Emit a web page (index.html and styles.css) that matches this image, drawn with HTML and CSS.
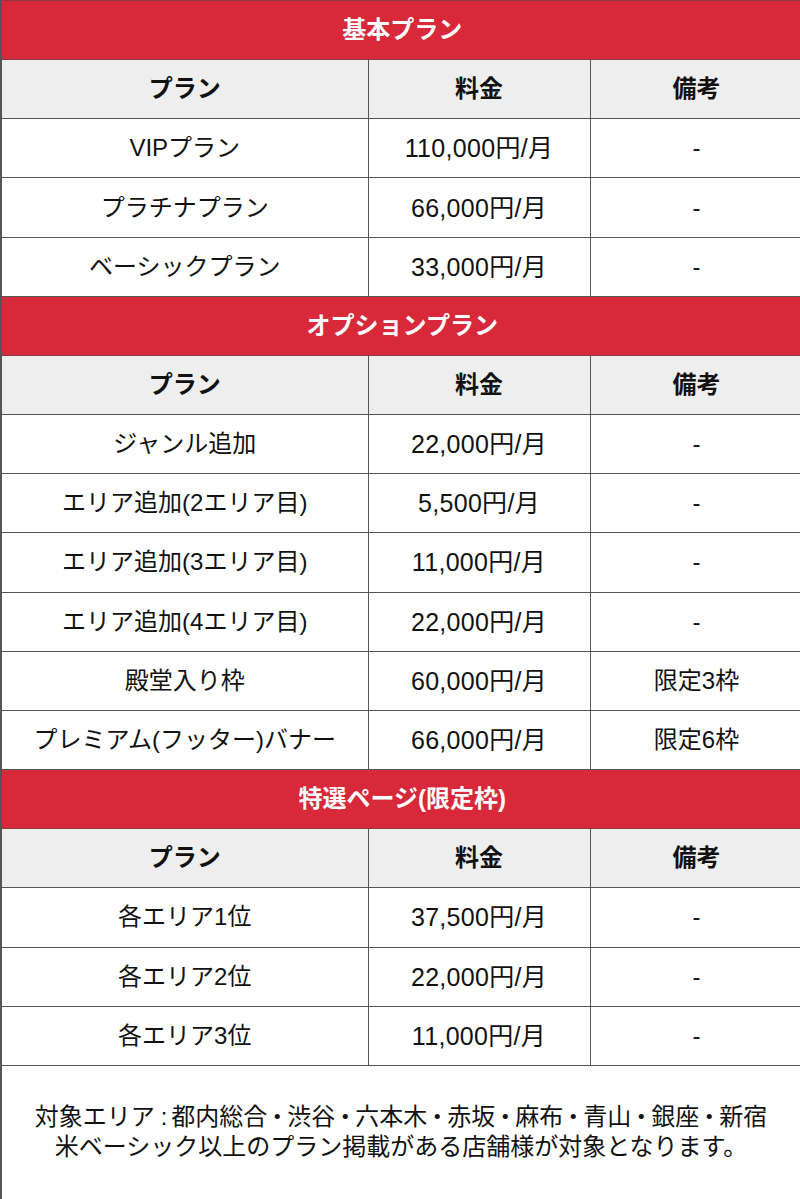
FILE: index.html
```html
<!DOCTYPE html>
<html lang="ja">
<head>
<meta charset="utf-8">
<link rel="stylesheet" href="styles.css">
</head>
<body>
<table class="price">
  <colgroup><col class="c1"><col class="c2"><col class="c3"></colgroup>
  <tr class="title"><td colspan="3">基本プラン</td></tr>
  <tr class="head"><td>プラン</td><td>料金</td><td>備考</td></tr>
  <tr><td>VIPプラン</td><td class="fee">110,000円/月</td><td>-</td></tr>
  <tr><td>プラチナプラン</td><td class="fee">66,000円/月</td><td>-</td></tr>
  <tr><td>ベーシックプラン</td><td class="fee">33,000円/月</td><td>-</td></tr>
  <tr class="title"><td colspan="3">オプションプラン</td></tr>
  <tr class="head"><td>プラン</td><td>料金</td><td>備考</td></tr>
  <tr><td>ジャンル追加</td><td class="fee">22,000円/月</td><td>-</td></tr>
  <tr><td>エリア追加(2エリア目)</td><td class="fee">5,500円/月</td><td>-</td></tr>
  <tr><td>エリア追加(3エリア目)</td><td class="fee">11,000円/月</td><td>-</td></tr>
  <tr><td>エリア追加(4エリア目)</td><td class="fee">22,000円/月</td><td>-</td></tr>
  <tr><td>殿堂入り枠</td><td class="fee">60,000円/月</td><td>限定3枠</td></tr>
  <tr><td>プレミアム(フッター)バナー</td><td class="fee">66,000円/月</td><td>限定6枠</td></tr>
  <tr class="title"><td colspan="3">特選ページ(限定枠)</td></tr>
  <tr class="head"><td>プラン</td><td>料金</td><td>備考</td></tr>
  <tr><td>各エリア1位</td><td class="fee">37,500円/月</td><td>-</td></tr>
  <tr><td>各エリア2位</td><td class="fee">22,000円/月</td><td>-</td></tr>
  <tr><td>各エリア3位</td><td class="fee">11,000円/月</td><td>-</td></tr>
</table>
<div class="note">
  <p>対象エリア<span class="colon">:</span>都内総合<span class="dot">・</span>渋谷<span class="dot">・</span>六本木<span class="dot">・</span>赤坂<span class="dot">・</span>麻布<span class="dot">・</span>青山<span class="dot">・</span>銀座<span class="dot">・</span>新宿</p>
  <p>米ベーシック以上のプラン掲載がある店舗様が対象となります。</p>
</div>
</body>
</html>
```
FILE: styles.css
```css
html, body {
  margin: 0;
  padding: 0;
  background: #fff;
}
body {
  width: 800px;
  height: 1199px;
  overflow: hidden;
  font-family: "Liberation Sans", "Noto Sans CJK JP", sans-serif;
  color: #111;
}
.price {
  width: 802px;
  border-collapse: collapse;
  table-layout: fixed;
}
.c1 { width: 367px; }
.c2 { width: 222px; }
.c3 { width: 213px; }
.price td {
  height: 58.17px;
  padding: 0;
  border: 1px solid #555;
  text-align: center;
  vertical-align: middle;
  font-size: 24px;
  line-height: 30px;
  white-space: nowrap;
}
.price td.fee {
  font-size: 25px;
  letter-spacing: 0.3px;
}
.price tr > td:first-child {
  border-left: 2px solid #555;
}
.price .title td {
  background: #d7293a;
  color: #fff;
  font-weight: bold;
  border-color: #8a3a40;
}
.price .head td {
  background: #eeeeee;
  font-weight: bold;
  color: #111;
}
.note {
  height: 134px;
  border-left: 2px solid #555;
  display: flex;
  flex-direction: column;
  justify-content: center;
  align-items: center;
  font-size: 24px;
  line-height: 30px;
  padding-bottom: 2px;
  box-sizing: border-box;
}
.note p {
  margin: 0;
  white-space: nowrap;
}
.note .colon {
  margin: 0 4px 0 6px;
}
.note .dot {
  margin: 0 -2px;
}
```
